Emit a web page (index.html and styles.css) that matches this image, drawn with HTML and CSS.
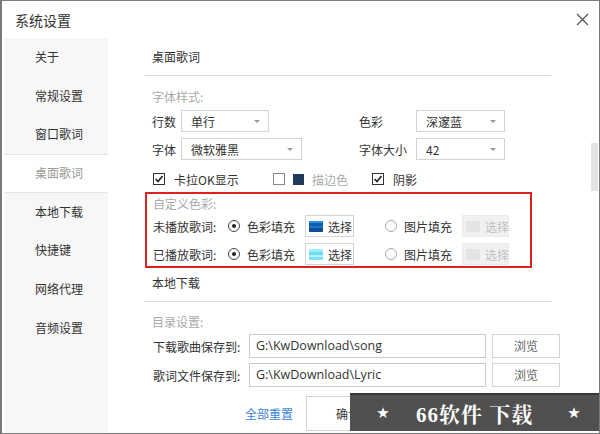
FILE: index.html
```html
<!DOCTYPE html>
<html lang="zh-CN">
<head>
    <meta charset="UTF-8">
    <title>系统设置</title>
    <link rel="stylesheet" href="styles.css">
</head>
<body>
    <div class="window">
        <div class="titlebar">
            <span class="title">系统设置</span>
            <svg class="close" width="13" height="13" viewBox="0 0 13 13">
                <path d="M1 1L12 12M12 1L1 12" stroke="#555" stroke-width="1.2" fill="none"/>
            </svg>
        </div>
        <div class="main">
            <ul class="nav">
                <li>关于</li>
                <li>常规设置</li>
                <li>窗口歌词</li>
                <li class="active">桌面歌词</li>
                <li>本地下载</li>
                <li>快捷键</li>
                <li>网络代理</li>
                <li>音频设置</li>
            </ul>
            <div class="content">
                <div class="panel">
                    <div class="sec-head">桌面歌词</div>
                    <div class="group-label">字体样式:</div>
                    <div class="form-row">
                        <div class="field col1">
                            <span class="lbl short">行数</span>
                            <div class="select w88"><span>单行</span><i class="arrow"></i></div>
                        </div>
                        <div class="field">
                            <span class="lbl long">色彩</span>
                            <div class="select w89"><span>深邃蓝</span><i class="arrow"></i></div>
                        </div>
                    </div>
                    <div class="form-row gap6">
                        <div class="field col1">
                            <span class="lbl short">字体</span>
                            <div class="select w121"><span>微软雅黑</span><i class="arrow"></i></div>
                        </div>
                        <div class="field">
                            <span class="lbl long">字体大小</span>
                            <div class="select w89"><span>42</span><i class="arrow"></i></div>
                        </div>
                    </div>
                    <div class="check-row">
                        <div class="check opt1">
                            <svg width="12" height="12" viewBox="0 0 12 12"><rect x="0.5" y="0.5" width="11" height="11" fill="#fff" stroke="#333"/><path d="M2.5 6L5 8.5L9.5 3" stroke="#222" stroke-width="1.6" fill="none"/></svg>
                            <span>卡拉OK显示</span>
                        </div>
                        <div class="check opt2">
                            <svg width="12" height="12" viewBox="0 0 12 12"><rect x="0.5" y="0.5" width="11" height="11" fill="#fff" stroke="#888"/></svg>
                            <i class="stroke-swatch"></i>
                            <span class="muted">描边色</span>
                        </div>
                        <div class="check">
                            <svg width="12" height="12" viewBox="0 0 12 12"><rect x="0.5" y="0.5" width="11" height="11" fill="#fff" stroke="#333"/><path d="M2.5 6L5 8.5L9.5 3" stroke="#222" stroke-width="1.6" fill="none"/></svg>
                            <span>阴影</span>
                        </div>
                    </div>
                    <div class="highlight">
                        <div class="group-label inner">自定义色彩:</div>
                        <div class="color-row">
                            <span class="row-lbl">未播放歌词:</span>
                            <i class="radio on"></i>
                            <span class="radio-txt">色彩填充</span>
                            <div class="pick"><i class="swatch deep"></i>选择</div>
                            <i class="radio off"></i>
                            <span class="radio-txt">图片填充</span>
                            <div class="pick disabled"><i class="swatch"></i>选择</div>
                        </div>
                        <div class="color-row second">
                            <span class="row-lbl">已播放歌词:</span>
                            <i class="radio on"></i>
                            <span class="radio-txt">色彩填充</span>
                            <div class="pick"><i class="swatch light"></i>选择</div>
                            <i class="radio off"></i>
                            <span class="radio-txt">图片填充</span>
                            <div class="pick disabled"><i class="swatch"></i>选择</div>
                        </div>
                    </div>
                    <div class="sec-head next">本地下载</div>
                    <div class="group-label dir">目录设置:</div>
                    <div class="path-row">
                        <span class="path-lbl">下载歌曲保存到:</span>
                        <div class="path-input">G:\KwDownload\song</div>
                        <div class="browse">浏览</div>
                    </div>
                    <div class="path-row second">
                        <span class="path-lbl">歌词文件保存到:</span>
                        <div class="path-input">G:\KwDownload\Lyric</div>
                        <div class="browse">浏览</div>
                    </div>
                    <div class="footer">
                        <a class="reset">全部重置</a>
                        <div class="ok-btn">确认</div>
                    </div>
                </div>
                <div class="scrollbar"><div class="thumb"></div></div>
            </div>
        </div>
        <div class="watermark">
            <span class="star first">★</span>
            <span class="wm-text">66软件 下载</span>
            <span class="star last">★</span>
        </div>
    </div>
</body>
</html>
```

FILE: styles.css
```css
body {
    margin: 0;
    background: #fff;
}
.window {
    position: relative;
    width: 600px;
    height: 434px;
    box-sizing: border-box;
    border: 1px solid #7a7a7a;
    border-left-width: 2px;
    background: #fff;
    overflow: hidden;
    font-family: "Noto Sans CJK SC", "Microsoft YaHei", sans-serif;
    font-size: 12px;
    color: #333;
    white-space: nowrap;
}
.titlebar {
    height: 37px;
    display: flex;
    align-items: center;
    justify-content: space-between;
    padding: 0 10px 0 13px;
}
.title {
    font-size: 14px;
    color: #333;
}
.main {
    display: flex;
    height: 395px;
}
.nav {
    list-style: none;
    margin: 0 0 0 2px;
    padding: 0;
    width: 104px;
    background: #f7f7f7;
    flex-shrink: 0;
}
.nav li {
    height: 38.7px;
    line-height: 38.7px;
    padding-left: 31px;
    box-sizing: border-box;
    color: #333;
}
.nav li.active {
    background: #fff;
    color: #999;
    border-top: 1px solid #e6e6e6;
    border-bottom: 1px solid #e6e6e6;
    line-height: 36.7px;
}
.content {
    flex: 1;
    display: flex;
}
.panel {
    margin-left: 37px;
    width: 406px;
    flex-shrink: 0;
}
.sec-head {
    height: 38px;
    line-height: 37px;
    padding-left: 7px;
    border-bottom: 1px solid #dcdcdc;
    box-sizing: border-box;
}
.sec-head.next {
    height: 34px;
    padding-top: 4px;
    line-height: 22px;
}
.group-label {
    color: #aaa;
    line-height: 18px;
    margin-top: 12px;
    padding-left: 7px;
}
.group-label.inner {
    margin-top: 1px;
    padding-left: 0;
}
.group-label.dir {
    margin-top: 11px;
}
.form-row {
    display: flex;
    align-items: center;
    height: 22px;
    margin-top: 4px;
    padding-left: 7px;
}
.form-row.gap6 {
    margin-top: 6px;
}
.field {
    display: flex;
    align-items: center;
}
.field.col1 {
    width: 207px;
}
.lbl.short {
    width: 29px;
}
.lbl.long {
    width: 57px;
}
.select {
    display: flex;
    align-items: center;
    justify-content: space-between;
    height: 22px;
    box-sizing: border-box;
    border: 1px solid #d3d3d3;
    padding: 0 8px 0 9px;
    background: #fff;
}
.w88 { width: 88px; }
.w89 { width: 89px; }
.w121 { width: 121px; }
.arrow {
    width: 0;
    height: 0;
    border-left: 3px solid transparent;
    border-right: 3px solid transparent;
    border-top: 3px solid #999;
}
.check-row {
    display: flex;
    align-items: center;
    height: 18px;
    margin-top: 10px;
    padding-left: 8px;
}
.check {
    display: flex;
    align-items: center;
    gap: 9px;
}
.check.opt1 {
    width: 120px;
}
.check.opt2 {
    width: 99px;
    gap: 8px;
}
.stroke-swatch {
    width: 11px;
    height: 11px;
    background: #1f3a5c;
}
.muted {
    color: #aaa;
}
.highlight {
    margin-top: 4px;
    width: 387px;
    height: 76px;
    box-sizing: border-box;
    border: 2px solid #e02020;
    padding-left: 6px;
}
.color-row {
    display: flex;
    align-items: center;
    height: 22px;
    margin-top: 2px;
}
.color-row.second {
    margin-top: 6px;
}
.row-lbl {
    width: 75px;
}
.radio {
    width: 12px;
    height: 12px;
    box-sizing: border-box;
    border-radius: 50%;
    border: 1px solid #444;
    display: flex;
    align-items: center;
    justify-content: center;
    flex-shrink: 0;
}
.radio.on::after {
    content: "";
    width: 4px;
    height: 4px;
    border-radius: 50%;
    background: #222;
}
.radio.off {
    border-color: #aaa;
    margin-left: 31px;
}
.radio-txt {
    margin-left: 7px;
    width: 58px;
}
.pick {
    display: flex;
    align-items: center;
    width: 49px;
    height: 22px;
    box-sizing: border-box;
    border: 1px solid #d3d3d3;
    padding-left: 3px;
    gap: 5px;
    background: #fff;
    flex-shrink: 0;
}
.pick.disabled {
    width: 47px;
    background: #f1f1f1;
    border-color: #ececec;
    color: #c2c2c2;
    gap: 5px;
}
.swatch {
    width: 14px;
    height: 11px;
    background: #e4e4e4;
    flex-shrink: 0;
}
.swatch.deep {
    background: linear-gradient(#2a8fe0 0, #2a8fe0 2px, #0d5fae 2px, #0d5fae 5px, #1c76c8 5px, #1c76c8 7px, #0b4f94 7px);
}
.swatch.light {
    background: linear-gradient(#9befff 0, #9befff 3px, #6cdcf2 3px, #6cdcf2 6px, #b4f3ff 6px, #b4f3ff 8px, #7fe3f5 8px);
}
.path-row {
    display: flex;
    align-items: center;
    height: 24px;
    margin-top: 3px;
    padding-left: 8px;
}
.path-row > * {
    flex-shrink: 0;
}
.path-row.second {
    margin-top: 5px;
}
.path-lbl {
    width: 96px;
}
.path-input {
    width: 237px;
    height: 24px;
    box-sizing: border-box;
    border: 1px solid #c4ccd4;
    padding-left: 6px;
    line-height: 22px;
    font-family: "Open Sans", "Noto Sans", sans-serif;
    font-size: 12.5px;
    color: #333;
}
.browse {
    margin-left: 6px;
    width: 68px;
    height: 24px;
    box-sizing: border-box;
    border: 1px solid #d3d3d3;
    line-height: 22px;
    text-align: center;
    color: #666;
}
.footer {
    display: flex;
    align-items: center;
    margin-top: 9px;
    height: 35px;
    padding-left: 100px;
}
.reset {
    color: #3b7fd6;
}
.ok-btn {
    margin-left: 13px;
    width: 84px;
    height: 35px;
    box-sizing: border-box;
    border: 1px solid #d3d3d3;
    line-height: 33px;
    text-align: center;
    flex-shrink: 0;
}
.scrollbar {
    margin-left: auto;
    margin-right: 1px;
    width: 7px;
}
.thumb {
    margin-top: 105px;
    height: 48px;
    background: #e4e4e4;
}
.watermark {
    position: absolute;
    left: 348px;
    top: 392px;
    width: 252px;
    height: 38px;
    box-sizing: border-box;
    background: #505050;
    border-top: 2px solid #383838;
    display: flex;
    align-items: center;
    color: #fff;
}
.star {
    font-family: "DejaVu Sans", sans-serif;
    font-size: 15px;
    width: 56px;
    text-align: center;
}
.star.first {
    width: 66px;
}
.star.last {
    margin-left: auto;
}
.wm-text {
    font-family: "Liberation Serif", "Noto Serif CJK SC", "Noto Sans CJK SC", serif;
    font-weight: bold;
    font-size: 21px;
    letter-spacing: 1px;
}
```
